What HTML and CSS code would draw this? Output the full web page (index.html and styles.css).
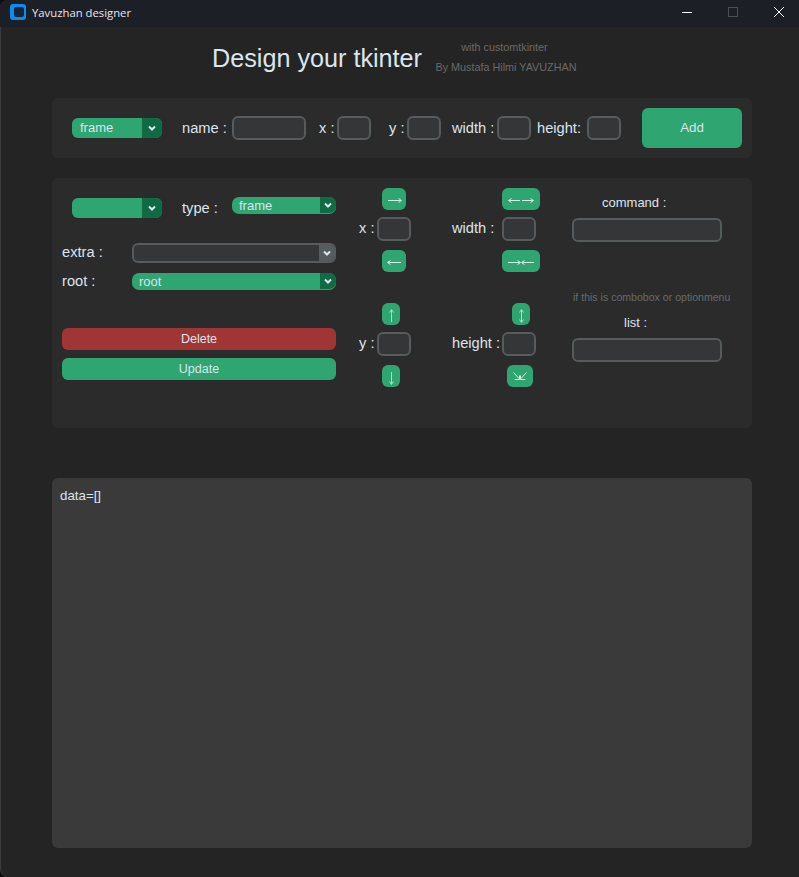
FILE: index.html
```html
<!DOCTYPE html>
<html>
    <head>
        <title>Yavuzhan designer</title>
        <meta charset="UTF-8">
        <link rel="stylesheet" href="styles.css">
    </head>
    <body>
        <div class="window">
            <div class="titlebar">
                <svg class="appicon" width="16" height="16" viewBox="0 0 16 16">
                    <rect width="16" height="16" rx="3" fill="#0a8cf0"/>
                    <rect x="4" y="3" width="10" height="10" rx="2" fill="#10253d"/>
                </svg>
                <span class="apptitle">Yavuzhan designer</span>
                <div class="winbuttons">
                    <svg width="46" height="27" viewBox="0 0 46 27"><path d="M18 12.5h10" stroke="#fff" fill="none"/></svg>
                    <svg width="46" height="27" viewBox="0 0 46 27"><rect x="18.5" y="7.5" width="9" height="9" stroke="#4a4d52" fill="none"/></svg>
                    <svg width="46" height="27" viewBox="0 0 46 27"><path d="M18 7l10 10M28 7l-10 10" stroke="#fff" fill="none"/></svg>
                </div>
            </div>
            <div class="main">
                <div class="header">
                    <h1 class="bigtitle">Design your tkinter</h1>
                    <div class="credits">
                        <div class="with">with customtkinter</div>
                        <div class="by">By Mustafa Hilmi YAVUZHAN</div>
                    </div>
                </div>

                <div class="panel addbar">
                    <div class="drop w90">
                        <span class="droptext">frame</span>
                        <span class="droparrow"><svg width="10" height="8" viewBox="0 0 10 8"><path d="M2 2.5l3 3 3-3" class="chev"/></svg></span>
                    </div>
                    <label class="lbl l-name">name :</label><input class="entry e-name" type="text">
                    <label class="lbl l-x">x :</label><input class="entry small" type="text">
                    <label class="lbl l-y">y :</label><input class="entry small" type="text">
                    <label class="lbl l-w">width :</label><input class="entry small" type="text">
                    <label class="lbl l-h">height:</label><input class="entry small" type="text">
                    <button class="btn add">Add</button>
                </div>

                <div class="panel editor">
                    <div class="leftcol">
                        <div class="row typerow">
                            <div class="drop w90 first">
                                <span class="droptext"></span>
                                <span class="droparrow"><svg width="10" height="8" viewBox="0 0 10 8"><path d="M2 2.5l3 3 3-3" class="chev"/></svg></span>
                            </div>
                            <label class="lbl l-type">type :</label>
                            <div class="drop thin w104">
                                <span class="droptext">frame</span>
                                <span class="droparrow"><svg width="10" height="8" viewBox="0 0 10 8"><path d="M2 2.5l3 3 3-3" class="chev"/></svg></span>
                            </div>
                        </div>
                        <div class="row extrarow">
                            <label class="lbl l-side l-extra">extra :</label>
                            <div class="combo">
                                <span class="combotext"></span>
                                <span class="comboarrow"><svg width="10" height="8" viewBox="0 0 10 8"><path d="M2 2.5l3 3 3-3" class="chev"/></svg></span>
                            </div>
                        </div>
                        <div class="row rootrow">
                            <label class="lbl l-side">root :</label>
                            <div class="drop thin w204">
                                <span class="droptext">root</span>
                                <span class="droparrow"><svg width="10" height="8" viewBox="0 0 10 8"><path d="M2 2.5l3 3 3-3" class="chev"/></svg></span>
                            </div>
                        </div>
                        <button class="btn wide red">Delete</button>
                        <button class="btn wide">Update</button>
                    </div>

                    <div class="poscol">
                        <div class="spin">
                            <button class="btn step b-x" aria-label="right"><svg width="24" height="22" viewBox="0 0 24 22"><path d="M6 12.5h13M16.5 10.5l3 2-3 2" class="arrow"/></svg></button>
                            <div class="field"><label class="lbl">x :</label><input class="entry small" type="text"></div>
                            <button class="btn step b-x after" aria-label="left"><svg width="24" height="22" viewBox="0 0 24 22"><path d="M6 12.5h13M8.5 10.5l-3 2 3 2" class="arrow"/></svg></button>
                        </div>
                        <div class="spin">
                            <button class="btn step b-y" aria-label="up"><svg width="18" height="22" viewBox="0 0 18 22"><path d="M9.5 7v12M7.5 9.5l2-3 2 3" class="arrow upright"/></svg></button>
                            <div class="field"><label class="lbl">y :</label><input class="entry small" type="text"></div>
                            <button class="btn step b-y after" aria-label="down"><svg width="18" height="22" viewBox="0 0 18 22"><path d="M9.5 7v12M7.5 16.5l2 3 2-3" class="arrow upright"/></svg></button>
                        </div>
                    </div>

                    <div class="sizecol">
                        <div class="spin">
                            <button class="btn step b-w" aria-label="wider"><svg width="38" height="22" viewBox="0 0 38 22"><path d="M7 12.5h11M9.5 10.5l-3 2 3 2M20 12.5h11M28.5 10.5l3 2-3 2" class="arrow"/></svg></button>
                            <div class="field"><label class="lbl">width :</label><input class="entry small" type="text"></div>
                            <button class="btn step b-w after" aria-label="narrower"><svg width="38" height="22" viewBox="0 0 38 22"><path d="M6 12.5h12M15.5 10.5l3 2-3 2M20 12.5h12M22.5 10.5l-3 2 3 2" class="arrow"/></svg></button>
                        </div>
                        <div class="spin">
                            <button class="btn step b-h" aria-label="taller"><svg width="18" height="22" viewBox="0 0 18 22"><path d="M9.5 7v12M7.5 9.5l2-3 2 3M7.5 16.5l2 3 2-3" class="arrow upright"/></svg></button>
                            <div class="field"><label class="lbl">height :</label><input class="entry small" type="text"></div>
                            <button class="btn step b-h2 after" aria-label="shorter"><svg width="26" height="22" viewBox="0 0 26 22"><path d="M6.5 7.5l5.5 6M7.5 14.5h5v-4M19.5 7.5l-5.5 6M18.5 14.5h-5v-4" class="arrow"/></svg></button>
                        </div>
                    </div>

                    <div class="cmdcol">
                        <label class="lbl13 l-command">command :</label>
                        <input class="entry e-long" type="text">
                        <div class="hint">if this is combobox or optionmenu</div>
                        <label class="lbl13 l-list">list :</label>
                        <input class="entry e-long" type="text">
                    </div>
                </div>

                <div class="output">data=[]</div>
            </div>
        </div>
    </body>
</html>
```

FILE: styles.css
```css
html, body{
    margin: 0;
    padding: 0;
    background: #0c0d0f;
}
.window{
    width: 799px;
    height: 877px;
    overflow: hidden;
    background: #242424;
    border-radius: 8px 0 0 8px;
    box-shadow: inset 1px 0 0 #3b3b3b;
    font-family: "Liberation Sans", Arial, sans-serif;
}
.titlebar{
    display: flex;
    align-items: center;
    height: 27px;
    background: #1c1f26;
    padding-left: 10px;
}
.appicon{
    margin-top: -3px;
}
.apptitle{
    margin-left: 6px;
    margin-top: -2px;
    font: 11.3px "Open Sans", sans-serif;
    color: #e6e6e6;
}
.winbuttons{
    display: flex;
    margin-left: auto;
    margin-right: -3px;
}
.main{
    padding: 0 47px 0 52px;
}
.header{
    display: flex;
    height: 71px;
    padding-left: 160px;
}
.bigtitle{
    margin: 16px 0 0 0;
    height: 30px;
    line-height: 30px;
    font-size: 25.2px;
    font-weight: normal;
    color: #dce4ee;
    white-space: nowrap;
}
.credits{
    margin-left: 13px;
    width: 142px;
    font-size: 10.8px;
    color: #6a6a6a;
    text-align: center;
}
.with{
    margin-top: 14px;
    padding-right: 3px;
    height: 12px;
    line-height: 12px;
}
.by{
    margin-top: 8px;
    height: 12px;
    line-height: 12px;
    white-space: nowrap;
}
.panel{
    width: 700px;
    background: #2b2b2b;
    border-radius: 6px;
}
.addbar{
    display: flex;
    align-items: center;
    height: 60px;
    padding-left: 20px;
    box-sizing: border-box;
}
.editor{
    display: flex;
    height: 250px;
    margin-top: 20px;
    padding: 10px 0 0 10px;
    box-sizing: border-box;
}
.lbl{
    font-size: 14.67px;
    color: #dce4ee;
    white-space: nowrap;
}
.lbl13{
    display: block;
    font-size: 13px;
    color: #dce4ee;
}
.l-name{ margin-left: 20px; width: 50px; }
.l-x{ margin-left: 13px; width: 18px; }
.l-y{ margin-left: 18px; width: 18px; }
.l-w{ margin-left: 11px; width: 45px; }
.l-h{ margin-left: 6px; width: 50px; }
.entry{
    display: block;
    box-sizing: border-box;
    height: 24px;
    padding: 0;
    border: 2px solid #565b5e;
    border-radius: 6px;
    background: #343638;
    outline: none;
}
.e-name{ width: 74px; }
.small{ width: 34px; }
.e-long{ width: 150px; }
.btn{
    display: block;
    border: none;
    border-radius: 6px;
    padding: 0;
    background: #2fa572;
    color: #dce4ee;
    font-family: inherit;
    font-size: 13px;
}
.btn svg{
    display: block;
}
.add{
    width: 100px;
    height: 40px;
    margin-left: 21px;
    padding-bottom: 2px;
    font-size: 13.33px;
}
.drop{
    display: flex;
    height: 20px;
    background: #2fa572;
    border-radius: 6px;
    overflow: hidden;
    color: #dce4ee;
    font-size: 13px;
    flex: none;
}
.droptext{
    flex: 1;
    padding-left: 8px;
    line-height: 19px;
}
.droparrow{
    display: flex;
    align-items: center;
    justify-content: center;
    width: 20px;
    background: #106a43;
}
.chev{
    fill: none;
    stroke: #dce4ee;
    stroke-width: 2;
}
.arrow{
    fill: none;
    stroke: #d3efe6;
    stroke-width: 1;
}
.upright{
    stroke: #9fe0d0;
}
.w90{ width: 90px; }
.thin{ height: 17px; border-radius: 7px; }
.thin .droptext{ padding-left: 7px; line-height: 17px; }
.thin .droparrow{ width: 16px; height: 16px; border-radius: 0 0 7px 0; }
.w104{ width: 104px; }
.w204{ width: 204px; }
.leftcol{
    width: 274px;
    padding-top: 9px;
    box-sizing: border-box;
}
.row{
    display: flex;
    align-items: center;
}
.row .lbl{
    margin-top: -1px;
}
.row .l-extra{
    margin-top: -3px;
}
.typerow{
    align-items: flex-start;
    height: 21px;
}
.first{
    margin: 1px 0 0 10px;
}
.row .l-type{
    width: 50px;
    margin: 3px 0 0 20px;
}
.l-side{
    width: 70px;
}
.extrarow{
    margin-top: 25px;
}
.rootrow{
    margin-top: 10px;
}
.combo{
    display: flex;
    width: 204px;
    height: 20px;
    box-sizing: border-box;
    border: 2px solid #565b5e;
    border-radius: 6px;
    background: #343638;
    overflow: hidden;
}
.combotext{
    flex: 1;
}
.comboarrow{
    display: flex;
    align-items: center;
    justify-content: center;
    width: 15px;
    background: #565b5e;
}
.wide{
    width: 274px;
    height: 22px;
    margin-top: 8px;
    font-size: 12.5px;
}
.red{
    margin-top: 38px;
    background: #9f3535;
}
.poscol{
    width: 52px;
    margin-left: 23px;
}
.sizecol{
    width: 88px;
    margin-left: 41px;
}
.spin{
    margin-bottom: 31px;
}
.field{
    display: flex;
    align-items: center;
    margin: 7px 0 9px 0;
}
.field .lbl{
    margin-top: -2px;
}
.poscol .lbl{ width: 18px; }
.sizecol .lbl{ width: 50px; }
.step{
    height: 22px;
}
.b-x{ width: 24px; margin-left: 23px; }
.b-y{ width: 18px; margin-left: 23px; }
.b-w{ width: 38px; margin-left: 50px; }
.b-h{ width: 18px; margin-left: 60px; }
.b-h2{ width: 26px; margin-left: 55px; }
.cmdcol{
    width: 150px;
    margin-left: 32px;
}
.l-command{
    height: 30px;
    padding: 7px 0 0 30px;
    box-sizing: border-box;
}
.hint{
    margin-top: 49px;
    padding-left: 1px;
    height: 12px;
    line-height: 12px;
    font-size: 10.57px;
    color: #666a6e;
    white-space: nowrap;
}
.l-list{
    height: 35px;
    padding: 12px 0 0 52px;
    box-sizing: border-box;
}
.output{
    width: 700px;
    height: 370px;
    margin-top: 50px;
    padding: 10px 8px;
    box-sizing: border-box;
    background: #3a3a3a;
    border-radius: 6px;
    color: #dce4ee;
    font-size: 13.3px;
}
```
